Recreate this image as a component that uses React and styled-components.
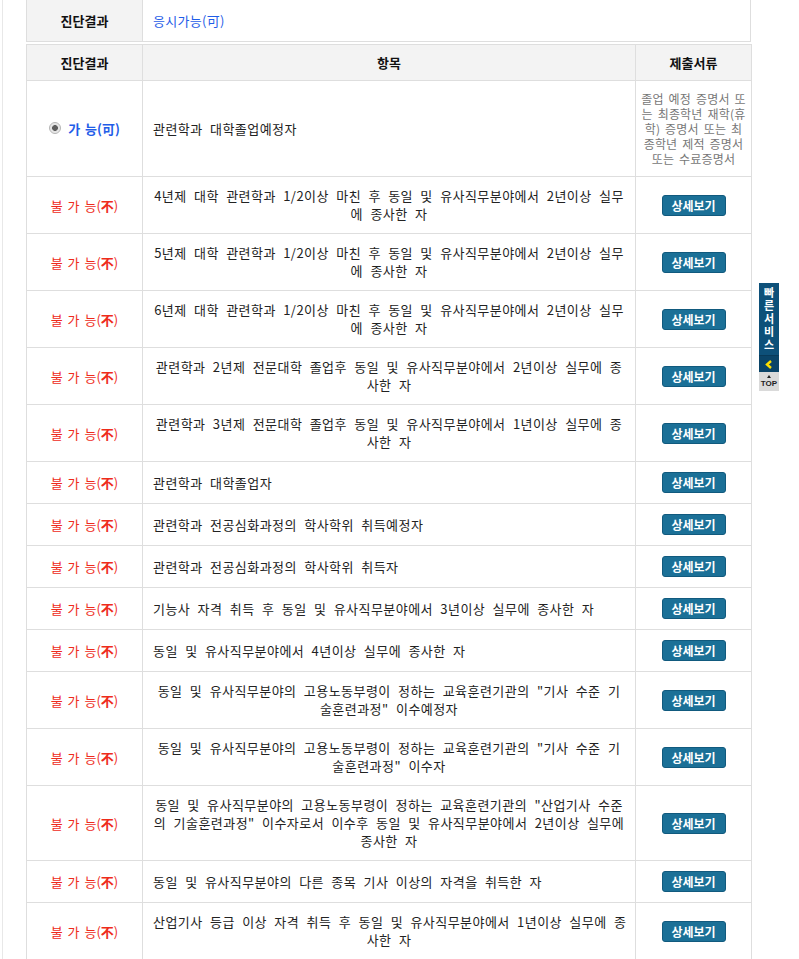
import React from 'react';
import styled, { createGlobalStyle } from 'styled-components';

const GlobalStyle = createGlobalStyle`
  html, body {
    margin: 0;
    padding: 0;
    background: #fff;
  }
  body {
    font-family: "Noto Sans CJK KR", "Liberation Sans", sans-serif;
    font-size: 13px;
    color: #222;
  }
`;

const Page = styled.div`
  margin-left: 2px;
  border-left: 1px solid #e8e8e8;
  padding-left: 23px;
  min-height: 980px;
  width: 726px;
  margin-top: -1px;
`;

const Table = styled.table`
  width: 725px;
  border-collapse: collapse;
  table-layout: fixed;
  margin-bottom: ${(props) => (props.gap ? '2px' : '0')};
`;

const Th = styled.th`
  background: #f3f3f3;
  border: 1px solid #dedede;
  font-weight: bold;
  font-size: 13px;
  color: #111;
  height: 35px;
  padding: 0;
  text-align: center;
  vertical-align: middle;
`;

const Td = styled.td`
  border: 1px solid #dedede;
  padding: 10px;
  line-height: 18px;
  font-size: 13px;
  letter-spacing: 0.45px;
  word-spacing: 4px;
  color: #222;
  vertical-align: middle;
  text-align: ${(props) => (props.center ? 'center' : 'left')};
  white-space: pre;
`;

const LabelCell = styled.th`
  background: #f3f3f3;
  border: 1px solid #dedede;
  width: 115px;
  height: 41px;
  padding: 0;
  font-weight: bold;
  font-size: 13px;
  color: #111;
  text-align: center;
`;

const ValueCell = styled.td`
  border: 1px solid #dedede;
  padding: 0 10px;
  color: #1f5de8;
  font-size: 13px;
  letter-spacing: 0.3px;
`;

const StatusCell = styled.td`
  border: 1px solid #dedede;
  padding: 0;
  text-align: center;
  vertical-align: middle;
`;

const Status = styled.span`
  display: inline-flex;
  align-items: center;
  gap: 7px;
  font-size: 13px;
  word-spacing: 2px;
  color: ${(props) => (props.ok ? '#1f5de8' : '#ee2b1b')};
  font-weight: ${(props) => (props.ok ? 'bold' : 'normal')};
`;

const Han = styled.b`
  font-weight: bold;
`;

const Radio = styled.span`
  width: 10px;
  height: 10px;
  border-radius: 50%;
  border: 1px solid #b5b5b5;
  background: radial-gradient(circle, #5e5e5e 0 2.6px, #e2e2e2 3.2px, #f4f4f4 100%);
  display: inline-block;
`;

const DocCell = styled.td`
  border: 1px solid #dedede;
  padding: 10px 2px;
  font-size: 12px;
  line-height: 15px;
  letter-spacing: 0.2px;
  word-spacing: 2px;
  color: #777;
  text-align: center;
  white-space: pre;
`;

const BtnCell = styled.td`
  border: 1px solid #dedede;
  padding: 10px 0;
  vertical-align: middle;
`;

const DetailButton = styled.button`
  display: block;
  margin: 0 auto;
  width: 64px;
  height: 21px;
  padding: 0;
  border: 1px solid #115a7e;
  border-radius: 3px;
  background: #1b7097;
  color: #fff;
  font-family: "Noto Sans CJK KR", sans-serif;
  font-size: 12px;
  font-weight: bold;
  line-height: 19px;
  cursor: pointer;
`;

const QuickBar = styled.div`
  position: fixed;
  left: 759px;
  top: 283px;
  width: 20px;
  display: flex;
  flex-direction: column;
`;

const QuickTitle = styled.div`
  background: #0d5079;
  color: #fff;
  font-size: 11px;
  font-weight: bold;
  letter-spacing: 2px;
  line-height: 20px;
  writing-mode: vertical-rl;
  text-orientation: upright;
  height: 72px;
  display: flex;
  align-items: center;
  justify-content: center;
  border-bottom: 1px solid #083a5a;
`;

const QuickFold = styled.div`
  background: #0a4468;
  height: 16px;
  display: flex;
  align-items: center;
  justify-content: center;
`;

const TopBtn = styled.div`
  background: #dadada;
  height: 19px;
  display: flex;
  flex-direction: column;
  align-items: center;
  justify-content: center;
  font-family: "Liberation Sans", sans-serif;
  font-size: 8px;
  font-weight: bold;
  color: #222;
  line-height: 8px;
`;

const Arrow = styled.span`
  width: 0;
  height: 0;
  border-left: 2.5px solid transparent;
  border-right: 2.5px solid transparent;
  border-bottom: 3px solid #222;
  margin-bottom: 2px;
`;

const rows = [
  { lines: ['4년제 대학 관련학과 1/2이상 마친 후 동일 및 유사직무분야에서 2년이상 실무', '에 종사한 자'] },
  { lines: ['5년제 대학 관련학과 1/2이상 마친 후 동일 및 유사직무분야에서 2년이상 실무', '에 종사한 자'] },
  { lines: ['6년제 대학 관련학과 1/2이상 마친 후 동일 및 유사직무분야에서 2년이상 실무', '에 종사한 자'] },
  { lines: ['관련학과 2년제 전문대학 졸업후 동일 및 유사직무분야에서 2년이상 실무에 종', '사한 자'] },
  { lines: ['관련학과 3년제 전문대학 졸업후 동일 및 유사직무분야에서 1년이상 실무에 종', '사한 자'] },
  { lines: ['관련학과 대학졸업자'] },
  { lines: ['관련학과 전공심화과정의 학사학위 취득예정자'] },
  { lines: ['관련학과 전공심화과정의 학사학위 취득자'] },
  { lines: ['기능사 자격 취득 후 동일 및 유사직무분야에서 3년이상 실무에 종사한 자'] },
  { lines: ['동일 및 유사직무분야에서 4년이상 실무에 종사한 자'] },
  { lines: ['동일 및 유사직무분야의 고용노동부령이 정하는 교육훈련기관의 "기사 수준 기', '술훈련과정" 이수예정자'] },
  { lines: ['동일 및 유사직무분야의 고용노동부령이 정하는 교육훈련기관의 "기사 수준 기', '술훈련과정" 이수자'] },
  {
    lines: [
      '동일 및 유사직무분야의 고용노동부령이 정하는 교육훈련기관의 "산업기사 수준',
      '의 기술훈련과정" 이수자로서 이수후 동일 및 유사직무분야에서 2년이상 실무에',
      '종사한 자',
    ],
  },
  { lines: ['동일 및 유사직무분야의 다른 종목 기사 이상의 자격을 취득한 자'] },
  { lines: ['산업기사 등급 이상 자격 취득 후 동일 및 유사직무분야에서 1년이상 실무에 종', '사한 자'] },
];

const docText = [
  '졸업 예정 증명서 또',
  '는 최종학년 재학(휴',
  '학) 증명서 또는 최',
  '종학년 제적 증명서',
  '또는 수료증명서',
].join('\n');

const App = () => (
  <>
    <GlobalStyle />
    <Page>
      <Table gap>
        <tbody>
          <tr>
            <LabelCell>진단결과</LabelCell>
            <ValueCell>응시가능(可)</ValueCell>
          </tr>
        </tbody>
      </Table>
      <Table>
        <colgroup>
          <col style={{ width: '116px' }} />
          <col style={{ width: '493px' }} />
          <col style={{ width: '116px' }} />
        </colgroup>
        <thead>
          <tr>
            <Th>진단결과</Th>
            <Th>항목</Th>
            <Th>제출서류</Th>
          </tr>
        </thead>
        <tbody>
          <tr>
            <StatusCell>
              <Status ok>
                <Radio />
                가 능(可)
              </Status>
            </StatusCell>
            <Td>관련학과 대학졸업예정자</Td>
            <DocCell>{docText}</DocCell>
          </tr>
          {rows.map((row) => (
            <tr key={row.lines[0] + row.lines.length}>
              <StatusCell>
                <Status>
                  <span>불 가 능(<Han>不</Han>)</span>
                </Status>
              </StatusCell>
              <Td center={row.lines.length > 1}>{row.lines.join('\n')}</Td>
              <BtnCell>
                <DetailButton type="button">상세보기</DetailButton>
              </BtnCell>
            </tr>
          ))}
        </tbody>
      </Table>
    </Page>
    <QuickBar>
      <QuickTitle>빠른서비스</QuickTitle>
      <QuickFold>
        <svg width="8" height="9" viewBox="0 0 8 9">
          <polyline points="6,1 2,4.5 6,8" fill="none" stroke="#ffe000" strokeWidth="2.4" />
        </svg>
      </QuickFold>
      <TopBtn>
        <Arrow />
        TOP
      </TopBtn>
    </QuickBar>
  </>
);

export default App;
